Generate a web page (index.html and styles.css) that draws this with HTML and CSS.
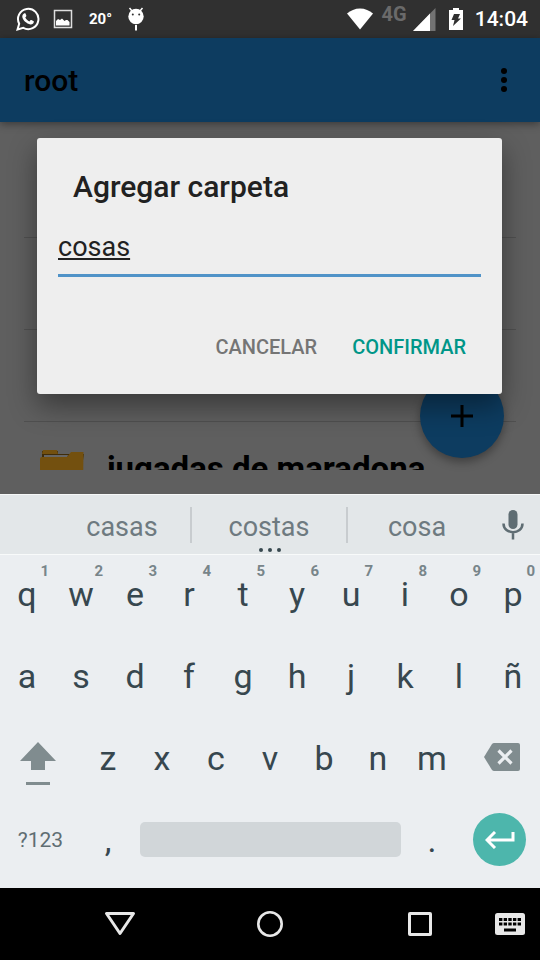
FILE: index.html
```html
<!DOCTYPE html>
<html lang="es">
<head>
<meta charset="utf-8">
<meta name="viewport" content="width=device-width, initial-scale=1">
<title>root</title>
<link rel="stylesheet" href="styles.css">
</head>
<body>
<header class="status">
  <div class="status-left">
    <svg class="ic-wa" width="24" height="24" viewBox="0 0 24 24" fill="none"><path d="M1.500 22.500l1.700-5.800A10.200 10.200 0 1 1 7.300 20.900z" stroke="#fff" stroke-width="2"/><path fill="#fff" d="M8.300 6.300c.4-.3 1-.2 1.200.3l.8 2c.1.400 0 .7-.2 1l-.8.900c.9 1.800 2.200 3 4.100 3.900l1-1.200c.3-.3.600-.4 1-.2l1.900 1c.5.200.6.500.5.900-.2 1.700-1.700 2.700-3.300 2.500-4-.6-7.500-3.900-8.200-7.300-.2-1.600.7-3.100 2-3.800z"/></svg>
    <svg class="ic-pic" width="20" height="20" viewBox="0 0 20 20"><rect x="1.500" y="1.500" width="17" height="17" fill="none" stroke="#dedede" stroke-width="1.500"/><path fill="#fff" d="M3 16.500v-4.500l2-2 2 1 2-1.500 2.500 2.500 1.500-1h1.500l2 2v3.500z"/></svg>
    <span class="temp">20°</span>
    <svg class="ic-bot" width="16" height="24" viewBox="0 0 16 24"><path d="M1.500 1l2.500 3M14.500 1L12 4" stroke="#fff" stroke-width="1.500"/><circle cx="8" cy="9.500" r="7.700" fill="#fff"/><circle cx="4.800" cy="7.500" r="1" fill="#303030"/><circle cx="11.200" cy="7.500" r="1" fill="#303030"/><path d="M8 18v5.500" stroke="#fff" stroke-width="2"/></svg>
  </div>
  <div class="status-right">
    <svg width="26" height="22" viewBox="0 0 26 22"><path fill="#fff" d="M0 5.500C3.500 2.500 8 .5 13 .5s9.500 2 13 5L13 21.500z"/></svg>
    <span class="net">4G</span>
    <svg class="ic-signal" width="23" height="23" viewBox="0 0 23 23"><path fill="#737373" d="M22.500 0v23H0z"/><path fill="#fff" d="M17 5.600V23H0z"/></svg>
    <svg class="ic-bat" width="14" height="22" viewBox="0 0 14 22"><path fill="#fff" d="M4 0h6v2h4v20H0V2h4z"/><path fill="#303030" d="M5 6h6l-2 4.500h3L4 18l1.500-6H2.500z"/></svg>
    <time class="clock">14:04</time>
  </div>
</header>

<main class="app">
  <div class="appbar">
    <h1 class="appbar-title">root</h1>
    <button class="icon-btn" aria-label="Más opciones"><svg width="6" height="24" viewBox="0 0 6 24"><circle cx="3" cy="3" r="3"/><circle cx="3" cy="12" r="3"/><circle cx="3" cy="21" r="3"/></svg></button>
  </div>
  <ul class="files">
    <li class="file"></li>
    <li class="file"></li>
    <li class="file"></li>
    <li class="file">
      <svg class="folder" width="44" height="36" viewBox="0 0 44 36"><path fill="#3f2c0a" d="M2 1h16v3h26l-1 6H2z"/><path fill="#73500f" d="M3 0h14l1 4H2z"/><path fill="#666" d="M4 5h24l-1 3H4z"/><path fill="#73500f" d="M0 9q0-2 2-2h25l4-5h12.500L43 34q0 2-2 2H3q-2 0-2-2L0 20z"/></svg>
      <span class="file-name">jugadas de maradona</span>
    </li>
  </ul>
  <button class="fab" aria-label="Agregar"><svg width="22" height="22" viewBox="0 0 22 22"><path d="M11 0v22M0 11h22" stroke="#000" stroke-width="3"/></svg></button>
  <div class="overlay">
    <form class="dialog" role="dialog" aria-labelledby="dialog-title">
      <h2 class="dialog-title"><label id="dialog-title" for="folder-name">Agregar carpeta</label></h2>
      <input class="dialog-input" id="folder-name" type="text" value="cosas" spellcheck="false">
      <div class="dialog-actions">
        <button class="action" type="button">CANCELAR</button>
        <button class="action action-primary" type="button">CONFIRMAR</button>
      </div>
    </form>
  </div>
</main>

<section class="keyboard" aria-label="Teclado">
  <div class="suggestions">
    <button class="suggestion">casas</button>
    <button class="suggestion suggestion-main">costas<svg class="more" width="22" height="4" viewBox="0 0 22 4"><circle cx="2" cy="2" r="2"/><circle cx="11" cy="2" r="2"/><circle cx="20" cy="2" r="2"/></svg></button>
    <button class="suggestion">cosa</button>
    <button class="mic" aria-label="Dictar"><svg width="22" height="30" viewBox="0 0 22 30"><rect x="6.500" y="0" width="9" height="19" rx="4.500" fill="#5f6d73"/><path d="M1.500 13.500c0 11.500 19 11.500 19 0M11 22v7.500" fill="none" stroke="#5f6d73" stroke-width="2.500"/></svg></button>
  </div>
  <div class="row">
    <button class="key">q<span class="hint">1</span></button>
    <button class="key">w<span class="hint">2</span></button>
    <button class="key">e<span class="hint">3</span></button>
    <button class="key">r<span class="hint">4</span></button>
    <button class="key">t<span class="hint">5</span></button>
    <button class="key">y<span class="hint">6</span></button>
    <button class="key">u<span class="hint">7</span></button>
    <button class="key">i<span class="hint">8</span></button>
    <button class="key">o<span class="hint">9</span></button>
    <button class="key">p<span class="hint">0</span></button>
  </div>
  <div class="row">
    <button class="key">a</button>
    <button class="key">s</button>
    <button class="key">d</button>
    <button class="key">f</button>
    <button class="key">g</button>
    <button class="key">h</button>
    <button class="key">j</button>
    <button class="key">k</button>
    <button class="key">l</button>
    <button class="key">ñ</button>
  </div>
  <div class="row">
    <button class="key key-wide key-shift" aria-label="Mayúsculas"><svg width="36" height="44" viewBox="0 0 36 44" fill="#808c8f"><path d="M18 0l18 19H25v9H11v-9H0z"/><path d="M6 40h24v3H6z"/></svg></button>
    <button class="key">z</button>
    <button class="key">x</button>
    <button class="key">c</button>
    <button class="key">v</button>
    <button class="key">b</button>
    <button class="key">n</button>
    <button class="key">m</button>
    <button class="key key-wide key-back" aria-label="Borrar"><svg width="36" height="28" viewBox="0 0 36 28"><path fill="#808c8f" d="M10 0h24q2 0 2 2v24q0 2-2 2H10q-1 0-2-1L0 14 8 1q1-1 2-1z"/><path d="M14.500 7.500l13 13M27.500 7.500l-13 13" stroke="#ebeef1" stroke-width="3.200"/></svg></button>
  </div>
  <div class="row">
    <button class="key key-wide key-sym">?123</button>
    <button class="key">,</button>
    <button class="key key-space" aria-label="Espacio"><span class="space-bar"></span></button>
    <button class="key">.</button>
    <button class="key key-wide" aria-label="Intro"><span class="enter"><svg width="30" height="18" viewBox="0 0 30 18"><path d="M28 1v8H2M10 1L2 9l8 8" fill="none" stroke="#fff" stroke-width="3"/></svg></span></button>
  </div>
</section>

<nav class="navbar">
  <button class="nav-btn" aria-label="Atrás"><svg width="32" height="26" viewBox="0 0 32 26"><path d="M2.500 2.500h27L16 22.500z" fill="none" stroke="#e8e8e8" stroke-width="3" stroke-linejoin="round"/></svg></button>
  <button class="nav-btn" aria-label="Inicio"><svg width="26" height="26" viewBox="0 0 26 26"><circle cx="13" cy="13" r="11.700" fill="none" stroke="#e8e8e8" stroke-width="2.600"/></svg></button>
  <button class="nav-btn" aria-label="Recientes"><svg width="24" height="24" viewBox="0 0 24 24"><rect x="1.500" y="1.500" width="21" height="21" rx=".5" fill="none" stroke="#e8e8e8" stroke-width="3"/></svg></button>
  <button class="nav-ime" aria-label="Cambiar teclado"><svg width="30" height="22" viewBox="0 0 30 22"><rect width="30" height="22" rx="2.500" fill="#e8e8e8"/><path d="M4 6.500h22M4 11h22" stroke="#000" stroke-width="3" stroke-dasharray="3.400 1.250"/><path d="M9 17h12" stroke="#000" stroke-width="3"/></svg></button>
</nav>
</body>
</html>
```
FILE: styles.css
```css
* {
  box-sizing: border-box;
}

body {
  margin: 0;
  min-height: 100vh;
  display: flex;
  flex-direction: column;
  font-family: Roboto, "Liberation Sans", sans-serif;
  background: #000;
}

button {
  margin: 0;
  padding: 0;
  border: 0;
  background: none;
  font: inherit;
  color: inherit;
}

svg {
  display: block;
  flex: none;
}

/* Status bar */
.status {
  display: flex;
  justify-content: space-between;
  align-items: center;
  height: 38px;
  padding: 0 12px 0 16px;
  background: #303030;
  color: #fff;
}

.status-left,
.status-right {
  display: flex;
  align-items: center;
}

.status-left {
  gap: 13px;
}

.temp {
  font-size: 15px;
  font-weight: 700;
  margin: 0 3px;
}

.net {
  align-self: flex-start;
  margin: 0 6px 0 9px;
  font-size: 20px;
  line-height: 14px;
  font-weight: 700;
  color: #6a6a6a;
}

.ic-bat {
  margin: 0 12px 0 13px;
}

.clock {
  font-size: 21px;
  font-weight: 500;
}

/* App */
.app {
  position: relative;
  flex: 1;
  display: flex;
  flex-direction: column;
  background: #5f5f5f;
}

.appbar {
  display: flex;
  align-items: center;
  justify-content: space-between;
  height: 84px;
  padding: 0 24px;
  background: #0d3c60;
  box-shadow: 0 2px 8px rgba(0, 0, 0, .4);
}

.appbar-title {
  margin: 0;
  font-size: 30px;
  font-weight: 500;
}

.icon-btn {
  display: flex;
  justify-content: center;
  width: 24px;
}

.files {
  flex: 1 1 0;
  min-height: 0;
  margin: 24px;
  padding: 0;
  overflow: hidden;
  list-style: none;
}

.file {
  display: flex;
  align-items: center;
  gap: 23px;
  height: 92px;
  padding: 0 16px;
  border-bottom: 1px solid #505050;
}

.file-name {
  padding-top: 2px;
  font-size: 33px;
  font-weight: 700;
  white-space: nowrap;
}

.fab {
  position: absolute;
  right: 36px;
  bottom: 36px;
  display: flex;
  align-items: center;
  justify-content: center;
  width: 84px;
  height: 84px;
  border-radius: 50%;
  background: #0d3c60;
  box-shadow: 0 4px 10px rgba(0, 0, 0, .35);
}

.overlay {
  position: absolute;
  inset: 0;
  display: flex;
  align-items: center;
  justify-content: center;
  padding: 0 38px 0 37px;
}

.dialog {
  flex: 1;
  padding: 29px 21px 23px;
  border-radius: 3px;
  background: #eee;
  box-shadow: 0 12px 28px rgba(0, 0, 0, .4);
}

.dialog-title {
  margin: 0 15px 20px;
  font-size: 30px;
  line-height: 40px;
  font-weight: 500;
  color: #212121;
}

.dialog-input {
  display: block;
  width: 100%;
  height: 50px;
  margin: 0;
  padding: 0 0 7px;
  border: 0;
  border-bottom: 3px solid #5093c8;
  outline: 0;
  background: none;
  font: 400 27px Roboto, "Liberation Sans", sans-serif;
  color: #212121;
  text-decoration: underline;
}

.dialog-actions {
  display: flex;
  justify-content: flex-end;
  gap: 35px;
  margin: 46px 15px 0 0;
}

.action {
  height: 48px;
  font-size: 20px;
  font-weight: 500;
  color: #757575;
}

.action-primary {
  color: #009688;
}

/* Keyboard */
.keyboard {
  padding-bottom: 5px;
  background: #ebeef1;
  color: #37474f;
}

.suggestions {
  display: grid;
  grid-template-columns: 136fr 158fr 138fr 54fr;
  align-items: center;
  height: 61px;
  padding-left: 10%;
  border-top: 1px solid #f6f8f8;
  border-bottom: 1px solid #f8fafa;
  background: #e3e7e9;
}

.suggestion {
  position: relative;
  height: 36px;
  padding: 4px 0 0;
  font-size: 27px;
  line-height: 32px;
  color: #6e7a80;
}

.suggestion-main {
  border: solid #c8cccf;
  border-width: 0 2px;
}

.more {
  position: absolute;
  left: 50%;
  bottom: -9px;
  margin-left: -10px;
  fill: #37474f;
}

.mic {
  display: flex;
  justify-content: center;
}

.row {
  display: grid;
  grid-template-columns: repeat(20, 1fr);
  height: 82px;
}

.key {
  position: relative;
  grid-column: span 2;
  display: flex;
  align-items: center;
  justify-content: center;
  padding-bottom: 5px;
  font-size: 34px;
}

.hint {
  position: absolute;
  top: 7px;
  right: 5px;
  font-size: 15px;
  line-height: 18px;
  font-weight: 700;
  color: #78858a;
}

.key-wide {
  grid-column: span 3;
}

.key-shift {
  padding: 8px 5px 0 0;
}

.key-back {
  padding: 0 0 6px 5px;
}

.key-sym {
  font-size: 21px;
  color: #5f6d73;
}

.key-space {
  grid-column: span 10;
  padding: 0 4px 5px 5px;
}

.space-bar {
  flex: 1;
  height: 35px;
  border-radius: 5px;
  background: #d1d6d9;
}

.enter {
  display: flex;
  align-items: center;
  justify-content: center;
  width: 53px;
  height: 53px;
  border-radius: 50%;
  background: #4db6ac;
}

/* Navigation bar */
.navbar {
  position: relative;
  display: flex;
  justify-content: center;
  height: 72px;
}

.nav-btn {
  display: flex;
  align-items: center;
  justify-content: center;
  width: 150px;
}

.nav-ime {
  position: absolute;
  top: 25px;
  right: 15px;
}
```
